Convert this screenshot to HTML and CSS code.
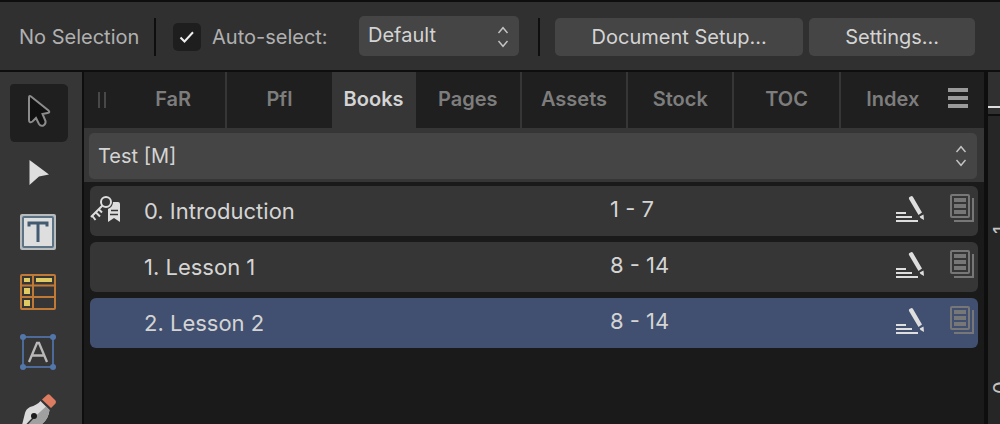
FILE: index.html
```html
<!DOCTYPE html>
<html lang="en">
<head>
<meta charset="utf-8">
<meta name="viewport" content="width=device-width, initial-scale=1">
<title>Books panel</title>
<link rel="stylesheet" href="styles.css">
</head>
<body>
<svg class="defs" aria-hidden="true">
  <symbol id="chevrons" viewBox="0 0 12 22"><path d="M1.5 7 6 1.7 10.500 7M1.500 15 6 20.300 10.500 15" fill="none" stroke="currentColor" stroke-width="1.400"/></symbol>
  <symbol id="edit" viewBox="0 0 28 26">
    <path d="M0 17h10M0 21h16M0 25h22" stroke="currentColor" stroke-width="2" fill="none"/>
    <path d="M13.500 1 15.500 0Q16.500 0 17 1L26 16.500 22.500 19 13 3Q12.500 1.500 13.500 1ZM23.700 20.500 27.500 18.500 28 24 24.500 22Z" fill="currentColor"/>
  </symbol>
  <symbol id="pages" viewBox="0 0 24 28">
    <rect x="1" y="1" width="18" height="22" rx="1" fill="none" stroke="currentColor" stroke-width="2"/>
    <path d="M4 4h12v4H4zM4 10h12v4H4zM4 16h12v4H4zM22 4h2v24H4v-2h18z" fill="currentColor"/>
  </symbol>
</svg>

<header class="toolbar">
  <span class="status">No Selection</span>
  <span class="divider"></span>
  <label class="check">
    <input type="checkbox" checked>
    <svg class="tick" viewBox="0 0 16 12" aria-hidden="true"><path d="M1.500 6.500 5.500 10.500 14 1.300" fill="none" stroke="currentColor" stroke-width="2"/></svg>
    <span>Auto-select:</span>
  </label>
  <div class="select mode">
    <select aria-label="Auto-select mode"><option>Default</option></select>
    <svg class="chevrons" aria-hidden="true"><use href="#chevrons"/></svg>
  </div>
  <span class="divider"></span>
  <div class="actions">
    <button type="button" class="btn setup">Document Setup...</button>
    <button type="button" class="btn settings">Settings...</button>
  </div>
</header>

<div class="workspace">
  <nav class="tools" aria-label="Tools">
    <button type="button" class="tool active" aria-label="Move tool">
      <svg viewBox="0 0 60 60"><path d="M21 16Q21 13 23 14.500L40.500 28.500Q42.500 30.500 39.500 31L34.500 32 37.500 39Q38 42 35.500 43.500 32.500 44.500 31 42L28 36 24.500 39.500Q21 41.500 21 38Z" fill="#111" stroke="#8c8c8c" stroke-width="2"/></svg>
    </button>
    <button type="button" class="tool" aria-label="Node tool">
      <svg viewBox="0 0 60 60"><path d="M21.500 18 41 32.500 31 34.500 21.500 43Z" fill="#dedede"/></svg>
    </button>
    <button type="button" class="tool" aria-label="Frame text tool">
      <svg viewBox="0 0 60 60"><rect x="12" y="12" width="36" height="36" rx="2" fill="#b9bcbd"/><rect x="15" y="15" width="30" height="30" rx="1" fill="#dedede" stroke="#5c7386" stroke-width="2"/><path d="M21 24.500V21h18v3.500M30 21v19" fill="none" stroke="#435b70" stroke-width="3"/></svg>
    </button>
    <button type="button" class="tool" aria-label="Table tool">
      <svg viewBox="0 0 60 60"><rect x="13" y="13" width="34" height="34" rx="1" fill="none" stroke="#c17a36" stroke-width="2"/><path d="M13 23.500h34M13 35h34M25 13v34" stroke="#c17a36" stroke-width="2"/><path d="M16 16h6v4h-6zM28 16h16v4H28zM16 26h6v6h-6zM16 38h6v6h-6z" fill="#e0cb62"/></svg>
    </button>
    <button type="button" class="tool" aria-label="Artistic text tool">
      <svg viewBox="0 0 60 60"><rect x="15" y="15" width="30" height="30" fill="none" stroke="#4c6b98" stroke-width="2"/><g fill="#5377aa"><circle cx="15" cy="15" r="3"/><circle cx="45" cy="15" r="3"/><circle cx="15" cy="45" r="3"/><circle cx="45" cy="45" r="3"/></g><path d="M21 40 29 21h2L39 40M24 33.500h12" fill="none" stroke="#b9b9b9" stroke-width="2.300"/></svg>
    </button>
    <button type="button" class="tool" aria-label="Pen tool">
      <svg viewBox="0 0 60 60"><path d="M39 13Q40.500 11.500 42 13L47.500 18.500Q48.500 20 47.500 21.500L43 26 34 17.500Z" fill="#dd7c60"/><path d="M32.500 19 41.500 28Q40.500 37 34 42L12 51 17 31Q18 27 22 25Q29 23 32.500 19Z" fill="#dadada"/><path d="M41.500 28Q40.500 37 34 42L12 51 27 34.500 38 24.500Z" fill="#a0a0a0"/><path d="M26 35 13 49" stroke="#333" stroke-width="1.500"/><circle cx="26" cy="34" r="3" fill="#1c1c1c"/></svg>
    </button>
  </nav>

  <main class="panel">
    <div class="tabs" role="tablist">
      <span class="grip"></span>
      <button type="button" role="tab" class="tab">FaR</button>
      <button type="button" role="tab" class="tab">Pfl</button>
      <button type="button" role="tab" class="tab current" aria-selected="true">Books</button>
      <button type="button" role="tab" class="tab">Pages</button>
      <button type="button" role="tab" class="tab">Assets</button>
      <button type="button" role="tab" class="tab">Stock</button>
      <button type="button" role="tab" class="tab">TOC</button>
      <button type="button" role="tab" class="tab">Index</button>
      <button type="button" class="menu" aria-label="Panel menu"><svg viewBox="0 0 20 20"><path d="M0 2h20M0 10h20M0 18h20" stroke="currentColor" stroke-width="4"/></svg></button>
    </div>
    <div class="bookbar">
      <div class="select book">
        <select aria-label="Book"><option>Test [M]</option></select>
        <svg class="chevrons" aria-hidden="true"><use href="#chevrons"/></svg>
      </div>
    </div>
    <ul class="chapters">
      <li class="chapter">
        <span class="marker"><svg viewBox="0 0 30 26"><circle cx="16" cy="6" r="5" fill="none" stroke="currentColor" stroke-width="2"/><path d="M12.500 9.500 1 21M2 19.500 5.500 24M5.500 16 10 20.500M8.500 13 12 16.500" fill="none" stroke="currentColor" stroke-width="2"/><path d="M23 6h5q2 0 2 2v18l-6-4-6 4V13q5-2 5-7z" fill="currentColor"/><path d="M21 14.500h7M20 18.500h8" stroke="#363636" stroke-width="1.500"/></svg></span>
        <span class="name">0. Introduction</span>
        <span class="range">1 - 7</span>
        <svg class="edit" aria-hidden="true"><use href="#edit"/></svg>
        <svg class="pages" aria-hidden="true"><use href="#pages"/></svg>
      </li>
      <li class="chapter">
        <span class="marker"></span>
        <span class="name">1. Lesson 1</span>
        <span class="range">8 - 14</span>
        <svg class="edit" aria-hidden="true"><use href="#edit"/></svg>
        <svg class="pages" aria-hidden="true"><use href="#pages"/></svg>
      </li>
      <li class="chapter selected">
        <span class="marker"></span>
        <span class="name">2. Lesson 2</span>
        <span class="range">8 - 14</span>
        <svg class="edit" aria-hidden="true"><use href="#edit"/></svg>
        <svg class="pages" aria-hidden="true"><use href="#pages"/></svg>
      </li>
    </ul>
  </main>

  <aside class="canvas">
    <div class="context"></div>
    <div class="ruler"><span class="mark">1</span><span class="mark">0</span></div>
  </aside>
</div>
</body>
</html>
```
FILE: styles.css
```css
* { box-sizing: border-box; }

body {
  margin: 0;
  height: 100vh;
  display: flex;
  flex-direction: column;
  overflow: hidden;
  background: #1a1a1a;
  color: #d4d4d4;
  font: 20px/24px Inter, "Liberation Sans", sans-serif;
}

button, select, input { margin: 0; font: inherit; color: inherit; border: 0; }
button { padding: 0; background: none; }
svg { display: block; }
.defs { position: absolute; width: 0; height: 0; }

.toolbar {
  flex: none;
  display: flex;
  align-items: center;
  height: 72px;
  padding: 2px 25px 0 19px;
  border-top: 2px solid #0e0e0e;
  border-bottom: 2px solid #0e0e0e;
  background: #303030;
  white-space: nowrap;
}
.status { width: 135px; color: #b0b0b0; }
.divider { flex: none; width: 2px; height: 38px; background: #0e0e0e; }

.check {
  position: relative;
  display: flex;
  align-items: center;
  gap: 11px;
  width: 186px;
  margin-left: 17px;
  color: #b0b0b0;
}
.check input {
  appearance: none;
  width: 28px;
  height: 28px;
  border-radius: 5px;
  background: #1e1e1e;
}
.tick { position: absolute; left: 6px; top: 8px; width: 16px; height: 12px; color: #eee; }

.select { position: relative; }
.select select {
  appearance: none;
  display: block;
  width: 100%;
  padding: 0 40px 0 9px;
  border-radius: 5px;
  background: #454545;
}
.chevrons { position: absolute; width: 12px; height: 22px; color: #c4c4c4; pointer-events: none; }
.mode { width: 160px; margin: 0 19px 2px 0; }
.mode select { height: 40px; padding-bottom: 2px; }
.mode .chevrons { right: 10px; top: 10px; }

.actions { flex: 1; display: flex; gap: 6px; margin-left: 15px; }
.btn { height: 38px; border-radius: 5px; background: #454545; }
.setup { flex: 3; }
.settings { flex: 2; }

.workspace { flex: 1; min-height: 0; display: flex; }

.tools {
  flex: none;
  width: 84px;
  padding: 10px 8px;
  border-right: 2px solid #0e0e0e;
  background: #363636;
  overflow: hidden;
}
.tool { display: block; width: 60px; height: 60px; }
.tool svg { width: 60px; height: 60px; }
.active { border-radius: 6px; background: #1f1f1f; background-clip: content-box; padding: 2px 0 0 2px; }
.active svg { margin: -2px 0 0 -2px; }

.panel { flex: 1; min-width: 0; display: flex; flex-direction: column; }

.tabs { flex: none; display: flex; height: 56px; background: #1f1f1f; }
.grip { width: 8px; height: 16px; margin: 20px 15px 0 14px; border: solid #484848; border-width: 0 2px; }
.tab {
  flex: 1 0 0;
  padding-bottom: 2px;
  border-right: 2px solid #363636;
  color: #7d7d7d;
  font-weight: 600;
}
.current { flex: none; width: 84px; border: 0; background: #363636; color: #d4d4d4; }
.tab:nth-child(3), .tab:nth-last-child(2) { border-right: 0; }
.menu { flex: none; width: 20px; margin: 0 16px 4px 3px; color: #9a9a9a; }
.menu svg { width: 20px; height: 20px; }

.bookbar { padding: 5px 7px 3px 5px; background: #363636; }
.book select { height: 46px; }
.book .chevrons { right: 10px; top: 12px; }

.chapters { list-style: none; margin: 0; padding: 4px 6px; display: flex; flex-direction: column; gap: 6px; }
.chapter {
  display: flex;
  align-items: center;
  height: 50px;
  padding-right: 4px;
  border-radius: 6px;
  background: #363636;
  font-size: 22px;
}
.selected { background: #415070; }
.marker { width: 54px; padding-bottom: 4px; }
.marker svg { width: 30px; height: 26px; color: #dedede; }
.name { flex: 466; }
.range { flex: 286; padding-bottom: 4px; }
.edit { flex: none; width: 28px; height: 26px; margin: 0 26px 4px 0; color: #dedede; }
.pages { flex: none; width: 24px; height: 28px; margin-bottom: 6px; color: #777; }

.canvas {
  flex: none;
  width: 16px;
  display: flex;
  flex-direction: column;
  border-left: 4px solid #0e0e0e;
  background: #262626;
  overflow: hidden;
}
.context { flex: none; height: 44px; padding-top: 34px; border-bottom: 2px solid #0e0e0e; background: #303030; }
.context::before { content: ""; display: block; height: 2px; background: #dedede; }
.ruler { display: flex; flex-direction: column; gap: 134px; padding: 102px 0 0 1px; }
.mark { width: 24px; height: 24px; writing-mode: vertical-rl; transform: rotate(180deg); text-align: center; color: #c4c4c4; }
```
